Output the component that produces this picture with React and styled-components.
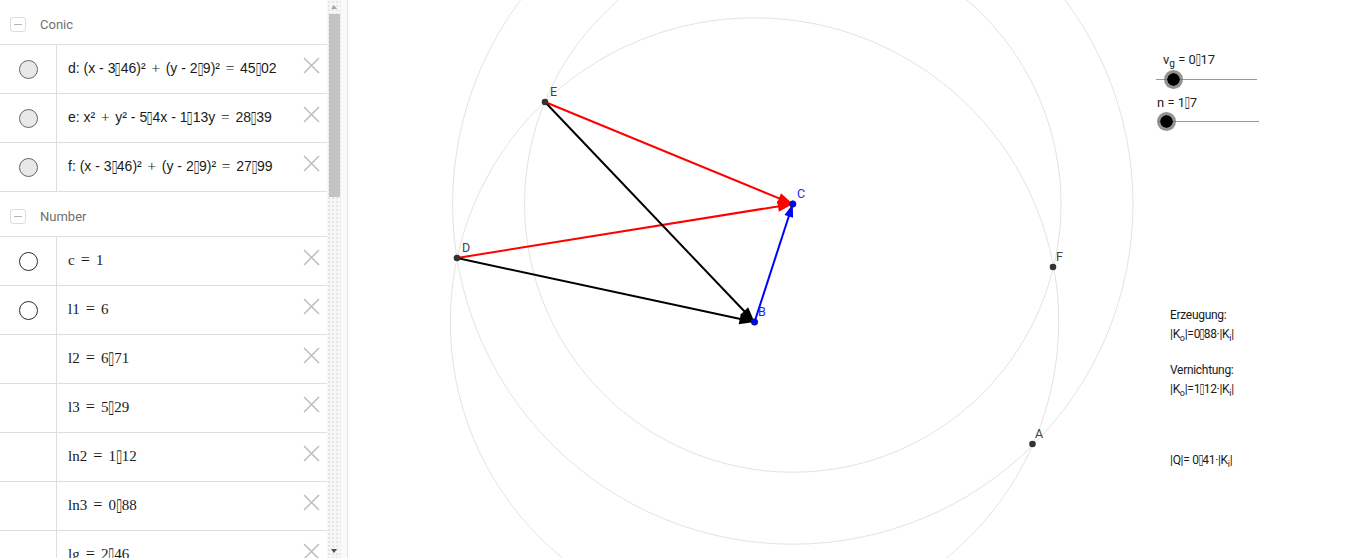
import React from 'react';
import styled, { createGlobalStyle } from 'styled-components';

const GlobalStyle = createGlobalStyle`
  html, body {
    margin: 0;
    padding: 0;
    background: #fff;
    overflow: hidden;
  }
  body {
    font-family: Roboto, "Liberation Sans", sans-serif;
  }
`;

// the decimal separator shows up as a missing glyph box in the original
const Tofu = styled.span`
  font-family: "DejaVu Sans", sans-serif;
  font-size: 1.2em;
  line-height: 0;
  display: inline-block;
  transform: scaleX(0.62);
  margin: 0 -2px;
`;

const Op = styled.span`
  font-family: "Liberation Serif", serif;
  font-size: 1.08em;
  margin: 0 2px;
`;

const fmt = (s) =>
  s.split('▯').flatMap((part, i) => (i === 0 ? [part] : [<Tofu key={i}>▯</Tofu>, part]));

// wider math spacing round "+" and "=" in the algebra rows
const formula = (s) =>
  s.split(/( [+=] )/).map((chunk, i) =>
    chunk === ' + ' || chunk === ' = ' ? (
      <Op key={'o' + i}>{chunk}</Op>
    ) : (
      <React.Fragment key={'t' + i}>{fmt(chunk)}</React.Fragment>
    )
  );

const groups = [
  {
    title: 'Conic',
    font: 'sans',
    rows: [
      { marble: 'grey', text: 'd: (x - 3▯46)² + (y - 2▯9)² = 45▯02' },
      { marble: 'grey', text: 'e: x² + y² - 5▯4x - 1▯13y = 28▯39' },
      { marble: 'grey', text: 'f: (x - 3▯46)² + (y - 2▯9)² = 27▯99' },
    ],
  },
  {
    title: 'Number',
    font: 'serif',
    rows: [
      { marble: 'white', text: 'c = 1' },
      { marble: 'white', text: 'l1 = 6' },
      { text: 'l2 = 6▯71' },
      { text: 'l3 = 5▯29' },
      { text: 'ln2 = 1▯12' },
      { text: 'ln3 = 0▯88' },
      { text: 'lg = 2▯46' },
      { text: 'n = 1▯7' },
    ],
  },
];

const Page = styled.div`
  display: flex;
  width: 1366px;
  height: 558px;
  overflow: hidden;
`;

const AlgebraPanel = styled.div`
  display: flex;
  width: 341px;
  flex-shrink: 0;
`;

const List = styled.div`
  width: 327px;
  overflow: hidden;
`;

const GroupHeader = styled.div`
  display: flex;
  align-items: center;
  height: 45px;
  box-sizing: border-box;
  padding-top: 5px;
  border-bottom: 1px solid #dedede;
`;

const Toggle = styled.span`
  display: flex;
  align-items: center;
  justify-content: center;
  width: 16px;
  height: 15px;
  margin-left: 10px;
  box-sizing: border-box;
  border: 1px solid #dcdcdc;
  border-radius: 3px;
  &::before {
    content: '';
    width: 8px;
    height: 1px;
    background: #b5b5b5;
  }
`;

const GroupTitle = styled.span`
  margin-left: 14px;
  font-size: 13px;
  color: #707070;
`;

const Row = styled.div`
  display: flex;
  height: 49px;
  box-sizing: border-box;
  border-bottom: 1px solid #dedede;
`;

const MarbleCell = styled.div`
  display: flex;
  align-items: center;
  justify-content: center;
  width: 56px;
  flex-shrink: 0;
  border-right: 1px solid #dedede;
`;

const Marble = styled.span`
  width: 19px;
  height: 19px;
  box-sizing: border-box;
  border-radius: 50%;
  border: 1px solid ${(p) => (p.$tone === 'grey' ? '#666' : '#2a2a2a')};
  background: ${(p) => (p.$tone === 'grey' ? '#e8e8e8' : '#fff')};
`;

const Formula = styled.div`
  flex: 1;
  display: flex;
  align-items: center;
  padding-left: 11px;
  padding-bottom: 2px;
  font-family: ${(p) =>
    p.$font === 'serif' ? '"Liberation Serif", serif' : '"Liberation Sans", Arial, sans-serif'};
  font-size: ${(p) => (p.$font === 'serif' ? '15px' : '14px')};
  color: #1a1a1a;
  white-space: pre;
`;

const CloseButton = styled.span`
  display: flex;
  align-items: center;
  width: 24px;
  padding-bottom: 8px;
  color: #bdbdbd;
`;

const Scrollbar = styled.div`
  display: flex;
  flex-direction: column;
  align-items: center;
  width: 14px;
  background-color: #f7f7f7;
  background-image: radial-gradient(#e3e3e3 0.7px, transparent 0.8px);
  background-size: 4px 4px;
`;

const ScrollArrow = styled.span`
  height: 14px;
  display: flex;
  align-items: center;
  justify-content: center;
  &::before {
    content: '';
    border-left: 3.5px solid transparent;
    border-right: 3.5px solid transparent;
    ${(p) =>
      p.$dir === 'up'
        ? 'border-bottom: 4px solid #a6a6a6;'
        : 'border-top: 4px solid #505050;'}
  }
`;

const Thumb = styled.span`
  width: 11px;
  height: 183px;
  background: #c3c3c3;
`;

const ScrollSpace = styled.span`
  flex: 1;
`;

const Splitter = styled.div`
  width: 6px;
  flex-shrink: 0;
  background: #fafafa;
  border-right: 1px solid #e4e4e4;
`;

const Canvas = styled.div`
  position: relative;
  flex: 1;
  background: #fff;
  svg {
    display: block;
  }
`;

const SliderBox = styled.div`
  position: absolute;
  left: ${(p) => p.$x}px;
  top: ${(p) => p.$y}px;
  width: 101px;
`;

const SliderLabel = styled.div`
  font-size: 13px;
  color: #222;
  margin-left: ${(p) => p.$indent}px;
  height: 18px;
  line-height: 18px;
  white-space: pre;
  sub {
    font-size: 10px;
    vertical-align: -3px;
    line-height: 0;
  }
`;

const Track = styled.div`
  position: relative;
  height: 1px;
  margin-top: ${(p) => p.$gap}px;
  background: #9a9a9a;
`;

const Knob = styled.span`
  position: absolute;
  left: ${(p) => p.$at}px;
  top: -9px;
  width: 13px;
  height: 13px;
  margin-left: -9px;
  border-radius: 50%;
  background: #000;
  border: 3px solid rgba(110, 110, 110, 0.75);
  background-clip: padding-box;
`;

const Note = styled.div`
  position: absolute;
  left: ${(p) => p.$x}px;
  top: ${(p) => p.$y}px;
  font-size: 12px;
  letter-spacing: -0.3px;
  line-height: 19px;
  color: #1a1a1a;
  white-space: pre;
  sub {
    font-size: 9px;
    vertical-align: -3px;
    line-height: 0;
  }
`;

const CloseIcon = () => (
  <svg width="17" height="17" viewBox="0 0 17 17">
    <path d="M1 1 L16 16 M16 1 L1 16" stroke="currentColor" strokeWidth="1.5" fill="none" />
  </svg>
);

const P = {
  D: [457, 258],
  E: [545, 102],
  C: [792.8, 204],
  B: [754.5, 322],
  F: [1053, 267],
  A: [1032.5, 444],
};

function Vector({ from, to, color, head = 15, half = 5.5 }) {
  const dx = to[0] - from[0];
  const dy = to[1] - from[1];
  const len = Math.hypot(dx, dy);
  const ux = dx / len;
  const uy = dy / len;
  const bx = to[0] - ux * head;
  const by = to[1] - uy * head;
  const px = -uy * half;
  const py = ux * half;
  return (
    <g>
      <line x1={from[0]} y1={from[1]} x2={bx + ux * 3} y2={by + uy * 3} stroke={color} strokeWidth="2" />
      <polygon points={`${to[0]},${to[1]} ${bx + px},${by + py} ${bx - px},${by - py}`} fill={color} />
    </g>
  );
}

function Geometry() {
  const labels = [
    ['E', 550, 96, '#444'],
    ['D', 462, 252, '#444'],
    ['C', 797, 198, '#1a1aff'],
    ['B', 758, 316, '#1a1aff'],
    ['F', 1056, 261, '#444'],
    ['A', 1035, 438, '#444'],
  ];
  return (
    <svg width="1018" height="558" viewBox="348 0 1018 558">
      <g fill="none" stroke="#e3e3e3" strokeWidth="1">
        <circle cx={P.C[0]} cy={P.C[1]} r="340.2" />
        <circle cx={P.C[0]} cy={P.C[1]} r="268.2" />
        <circle cx={P.B[0]} cy={P.B[1]} r="304.2" />
      </g>
      <Vector from={P.E} to={P.C} color="#ff0000" />
      <Vector from={P.D} to={P.C} color="#ff0000" />
      <Vector from={P.E} to={P.B} color="#000" />
      <Vector from={P.D} to={P.B} color="#000" />
      <Vector from={P.B} to={P.C} color="#0000ff" head={13} half={4.5} />
      {['D', 'E', 'F', 'A'].map((k) => (
        <circle key={k} cx={P[k][0]} cy={P[k][1]} r="3.3" fill="#333" />
      ))}
      {['B', 'C'].map((k) => (
        <circle key={k} cx={P[k][0]} cy={P[k][1]} r="3.2" fill="#0000ff" stroke="#1a1a4a" strokeWidth="0.8" />
      ))}
      {labels.map(([t, x, y, c]) => (
        <text key={t} x={x} y={y} fill={c} fontSize="12.5" fontFamily="Roboto, 'Liberation Sans', sans-serif">
          {t}
        </text>
      ))}
    </svg>
  );
}

export default function App() {
  return (
    <Page>
      <GlobalStyle />
      <AlgebraPanel>
        <List>
          {groups.map((g) => (
            <React.Fragment key={g.title}>
              <GroupHeader>
                <Toggle />
                <GroupTitle>{g.title}</GroupTitle>
              </GroupHeader>
              {g.rows.map((r) => (
                <Row key={r.text}>
                  <MarbleCell>{r.marble && <Marble $tone={r.marble} />}</MarbleCell>
                  <Formula $font={g.font}>{formula(r.text)}</Formula>
                  <CloseButton>
                    <CloseIcon />
                  </CloseButton>
                </Row>
              ))}
            </React.Fragment>
          ))}
        </List>
        <Scrollbar>
          <ScrollArrow $dir="up" />
          <Thumb />
          <ScrollSpace />
          <ScrollArrow $dir="down" />
        </Scrollbar>
      </AlgebraPanel>
      <Splitter />
      <Canvas>
        <Geometry />
        <SliderBox $x={808} $y={51}>
          <SliderLabel $indent={7}>
            v<sub>g</sub> = {fmt('0▯17')}
          </SliderLabel>
          <Track $gap={10}>
            <Knob $at={17} />
          </Track>
        </SliderBox>
        <SliderBox $x={810} $y={94}>
          <SliderLabel $indent={-1}>n = {fmt('1▯7')}</SliderLabel>
          <Track $gap={9}>
            <Knob $at={8} />
          </Track>
        </SliderBox>
        <Note $x={822} $y={306}>
          Erzeugung:
          {'\n'}|K<sub>o</sub>|={fmt('0▯88')}·|K<sub>i</sub>|
        </Note>
        <Note $x={822} $y={361}>
          Vernichtung:
          {'\n'}|K<sub>o</sub>|={fmt('1▯12')}·|K<sub>i</sub>|
        </Note>
        <Note $x={822} $y={451}>
          |Q|= {fmt('0▯41')}·|K<sub>i</sub>|
        </Note>
      </Canvas>
    </Page>
  );
}
